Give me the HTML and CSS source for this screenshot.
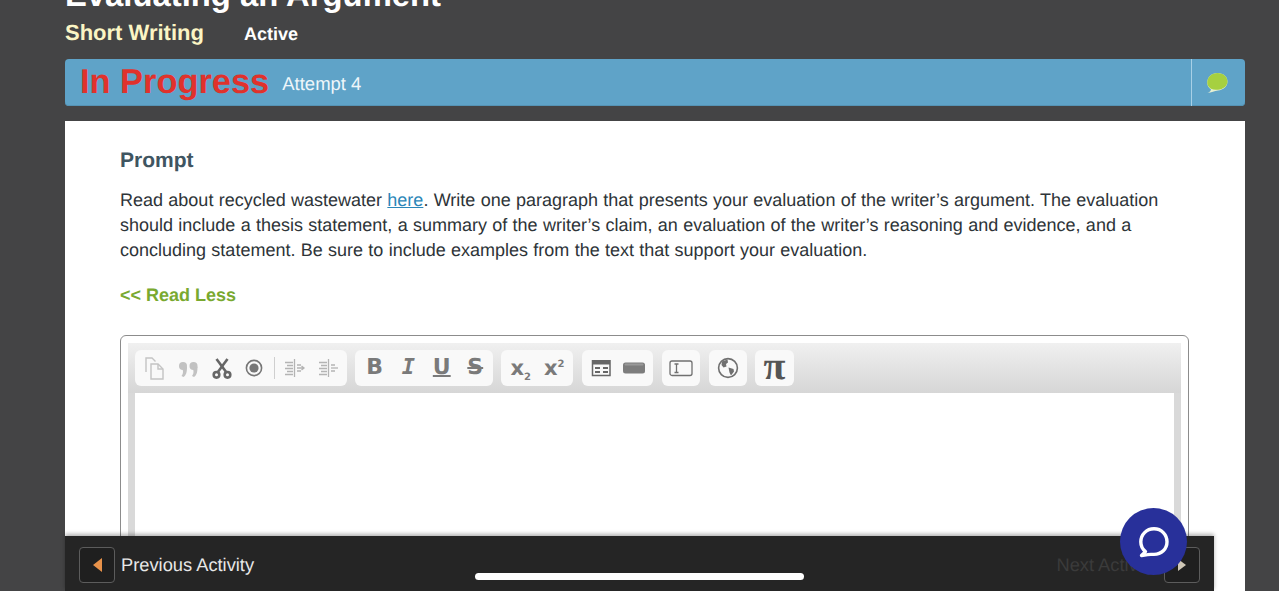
FILE: index.html
```html
<!DOCTYPE html>
<html lang="en">
<head>
<meta charset="utf-8">
<title>Evaluating an Argument</title>
<link rel="stylesheet" href="styles.css">
</head>
<body>
<div class="page">
  <h1 class="title">Evaluating an Argument</h1>
  <div class="subhead">
    <span class="kind">Short Writing</span>
    <span class="state">Active</span>
  </div>
  <div class="status">
    <div class="status-main">
      <span class="progress">In Progress</span>
      <span class="attempt">Attempt 4</span>
    </div>
    <div class="status-side">
      <svg class="bubble" width="24" height="24" viewBox="0 0 24 24">
        <path d="M2.5 23 C5 22 6 20.5 6 19.5 C3 17.5 2 14.5 2.3 11.5 C3 6.5 7 3 12.5 3 C18 3 22.5 6.5 22.5 11.5 C22.5 16.5 18 20 13 20.5 C9.5 21 6.5 22.8 2.5 23 Z" fill="#e6f0d2"/>
        <path d="M6 18.8 C3 17 2 14.5 2.3 11.5 C3 6.5 7 3 12.5 3 C18 3 22.5 6.5 22.5 11.5 C22.5 16 18.2 19.3 13 19.7 C10.5 20 8 19.8 6 18.8 Z" fill="#a6d040"/>
      </svg>
    </div>
  </div>
  <main class="panel">
    <h2 class="prompt-title">Prompt</h2>
    <p class="prompt-text">Read about recycled wastewater <a class="link" href="#">here</a>. Write one paragraph that presents your evaluation of the writer’s argument. The evaluation should include a thesis statement, a summary of the writer’s claim, an evaluation of the writer’s reasoning and evidence, and a concluding statement. Be sure to include examples from the text that support your evaluation.</p>
    <a class="read-less" href="#">&lt;&lt; Read Less</a>
    <div class="editor">
      <div class="editor-inner">
        <div class="toolbar">
          <div class="group g1">
            <svg class="ic" width="24" height="24" viewBox="0 0 24 24" fill="none" stroke="#c4c4c4" stroke-width="1.4"><path d="M4 16 V2 H10 L13.5 5.5"/><path d="M9 8 H16 L21 13 V23 H9 Z"/><path d="M16 8 V13 H21"/></svg>
            <svg class="ic" width="24" height="24" viewBox="0 0 24 24" fill="#c2c2c2"><circle cx="7" cy="10" r="4"/><path d="M7.5 21 C10.5 19 11 15.5 11 10.5 L6.5 13 C7.5 16 7 18 5.5 20 Z"/><circle cx="17.5" cy="10" r="4"/><path d="M18 21 C21 19 21.5 15.5 21.5 10.5 L17 13 C18 16 17.5 18 16 20 Z"/></svg>
            <svg class="ic" width="24" height="24" viewBox="0 0 24 24" fill="none" stroke="#666" stroke-width="2.6"><path d="M6.5 3 L16.5 16.5"/><path d="M17.5 3 L7.5 16.5"/><circle cx="6.5" cy="18.8" r="2.8"/><circle cx="17.5" cy="18.8" r="2.8"/></svg>
            <svg class="ic radio" width="24" height="24" viewBox="0 0 24 24"><circle cx="12" cy="12" r="7.6" fill="none" stroke="#777" stroke-width="1.6"/><circle cx="12" cy="12" r="4.6" fill="#777"/></svg>
            <span class="divider"></span>
            <svg class="ic indent" width="24" height="24" viewBox="0 0 24 24" fill="none" stroke="#b4b4b4" stroke-width="1.3"><path d="M12.5 3 V21"/><path d="M3 6.5 H11 M5 9.5 H11 M3 12.5 H11 M5 15.5 H11 M3 18.5 H11 M15 9 H19 M15 15 H19"/><path d="M15 12 H22 M19.5 10 L22 12 L19.5 14"/></svg>
            <svg class="ic outdent" width="24" height="24" viewBox="0 0 24 24" fill="none" stroke="#b4b4b4" stroke-width="1.3"><path d="M12.5 3 V21"/><path d="M3 6.5 H11 M5 9.5 H11 M3 12.5 H11 M5 15.5 H11 M3 18.5 H11 M15 9 H19 M15 15 H19"/><path d="M15 12 H22"/></svg>
          </div>
          <div class="group g2">
            <span class="fmt bold">B</span>
            <span class="fmt italic">I</span>
            <span class="fmt underline">U</span>
            <span class="fmt strike">S</span>
          </div>
          <div class="group g3">
            <span class="fmt script">x<sub>2</sub></span>
            <span class="fmt script">x<sup>2</sup></span>
          </div>
          <div class="group g4">
            <svg class="ic" width="24" height="24" viewBox="0 0 24 24"><path d="M3.5 4.8 H21 V19.5 H3.5 Z" fill="none" stroke="#666" stroke-width="1.5"/><path d="M3.5 5 H21 V8.5 H3.5 Z" fill="#666"/><path d="M6 11 H11 V13 H6 Z M6 15 H11 V17 H6 Z M14 11 H19 V13 H14 Z M14 15 H19 V17 H14 Z" fill="#666"/></svg>
            <svg class="ic" width="24" height="24" viewBox="0 0 24 24"><rect x="1" y="6.5" width="22" height="11" rx="2.5" fill="#7d7d7d"/><rect x="2.5" y="7.5" width="19" height="2" rx="1" fill="#999"/></svg>
          </div>
          <div class="group g5">
            <svg class="ic" width="24" height="24" viewBox="0 0 24 24" fill="none" stroke="#707070" stroke-width="1.3"><rect x="1" y="5" width="22" height="14.5" rx="2"/><path d="M5.5 8 H9.5 M5.5 16.5 H9.5 M7.5 8 V16.5"/></svg>
          </div>
          <div class="group g6">
            <svg class="ic" width="24" height="24" viewBox="0 0 24 24"><circle cx="12" cy="12" r="9.4" fill="none" stroke="#707070" stroke-width="1.6"/><path d="M6 5.5 L11.5 3.5 L12 6.5 L10 8 L10.5 10.5 L7.5 11.5 L5.5 9 Z M12.5 11.5 L17.5 13 L18 15.5 L15 19.5 L13.5 16.5 Z" fill="#707070"/></svg>
          </div>
          <div class="group g7">
            <span class="pi">π</span>
          </div>
        </div>
        <div class="editor-area"></div>
      </div>
    </div>
  </main>
</div>

<footer class="bottom-bar">
  <div class="nav-prev">
    <span class="nav-btn"><span class="arrow-left"></span></span>
    <span class="nav-label">Previous Activity</span>
  </div>
  <div class="nav-next">
    <span class="nav-label dim">Next Activity</span>
    <span class="nav-btn"><span class="arrow-right"></span></span>
  </div>
</footer>
<div class="home-indicator"></div>
<div class="chat">
  <svg width="34" height="34" viewBox="0 0 34 34" fill="none"><path d="M4.5 30.5 L8.5 26.6 C5.2 24 3.8 20.5 3.8 16.8 C3.8 9.6 9.5 3.8 17 3.8 C24.5 3.8 30 9.6 30 16.8 C30 24 24.5 29.4 17 29.4 C14.5 29.4 12.5 29.2 10.5 29.6 Z" stroke="#fff" stroke-width="3.4" stroke-linejoin="round"/></svg>
</div>
</body>
</html>
```

FILE: styles.css
```css
* { box-sizing: border-box; }
html, body { margin: 0; height: 100%; overflow: hidden; }
body {
  background: #444445;
  font-family: "Liberation Sans", Arial, sans-serif;
  text-rendering: geometricPrecision;
  position: relative;
}
.page {
  padding: 0 34px 0 65px;
  height: 591px;
  display: flex;
  flex-direction: column;
}
.title {
  margin: -23px 0 0;
  font-size: 32.8px;
  line-height: 36px;
  height: 36px;
  font-weight: 700;
  color: #fff;
  white-space: nowrap;
}
.subhead {
  display: flex;
  align-items: baseline;
  gap: 40px;
  height: 42px;
  margin-top: 3px;
}
.kind { font-size: 22px; line-height: 34px; font-weight: 700; color: #fbf5c4; }
.state { font-size: 18px; line-height: 36px; font-weight: 700; color: #fff; }
.status {
  display: flex;
  height: 47px;
  margin-top: 1px;
  background: #5fa3c8;
  border-radius: 4px;
  box-shadow: inset 0 -1px 0 #5593b5;
}
.status-main {
  flex: 1;
  display: flex;
  align-items: center;
  gap: 13px;
  padding-left: 15px;
  border-right: 1px solid #a8d0e6;
}
.progress { font-size: 34.4px; line-height: 42px; padding-bottom: 2px; font-weight: 700; color: #e0322c; }
.attempt { font-size: 18.5px; color: #eef6fa; padding-top: 2px; }
.status-side {
  width: 53px;
  display: flex;
  align-items: center;
  justify-content: center;
  padding-bottom: 2px;
}
.bubble { margin-right: 3px; }
.panel {
  margin-top: 15px;
  flex: 1;
  min-height: 0;
  overflow: hidden;
  background: #fff;
  padding: 26px 56px 0 55px;
}
.prompt-title {
  margin: 0;
  font-size: 21px;
  line-height: 28px;
  font-weight: 700;
  color: #3f5561;
}
.prompt-text {
  margin: 13px 0 0;
  font-size: 18px;
  line-height: 25px;
  word-spacing: .3px;
  color: #2e3438;
}
.link { color: #2b86b8; text-decoration: underline; }
.read-less {
  display: block;
  margin-top: 19px;
  font-size: 18px;
  line-height: 26px;
  font-weight: 700;
  color: #79a92f;
  text-decoration: none;
}
.editor {
  margin-top: 27px;
  height: 300px;
  border: 1px solid #8c8c8c;
  border-radius: 6px;
  padding: 7px 7px 0;
  background: #fff;
}
.editor-inner {
  height: 100%;
  display: flex;
  flex-direction: column;
  padding: 0 7px;
  background: #d9d9d9;
}
.toolbar {
  display: flex;
  gap: 8px;
  height: 50px;
  margin: 0 -7px;
  padding: 7px 7px 6px;
  background: linear-gradient(#f0f0f0, #d6d6d6);
}
.editor-area { flex: 1; background: #fff; }
.group {
  height: 36px;
  display: flex;
  align-items: center;
  background: #f9f9f9;
  border-radius: 6px;
}
.ic { flex: none; }
.g1 { width: 212px; padding-left: 7px; gap: 10px; }
.radio { margin-left: -2px; }
.divider { width: 1px; height: 22px; background: #cfcfcf; margin-left: -2px; }
.indent { margin-left: -3px; }
.outdent { margin-left: -0.5px; }
.g2 { width: 138px; padding-left: 3px; }
.g3 { width: 72px; padding-left: 3px; }
.g4 { width: 71px; padding-left: 7px; gap: 9px; margin-left: 1px; }
.g5, .g6, .g7 { width: 38px; justify-content: center; }
.g5 { margin-left: 1px; }
.g6 { margin-left: 1px; }
.g7 { width: 39px; }
.fmt {
  width: 33.5px;
  text-align: center;
  font-size: 22px;
  line-height: 24px;
  font-weight: 700;
  color: #7a7a7a;
  font-family: "DejaVu Sans", sans-serif;
}
.italic { font-family: "DejaVu Sans Mono", monospace; font-style: italic; }
.underline { text-decoration: underline; text-decoration-thickness: 2px; text-underline-offset: 1px; }
.strike { text-decoration: line-through; }
.script { font-size: 21px; }
.script sub, .script sup { font-size: 10px; line-height: 0; }
.pi {
  font-family: "Liberation Serif", serif;
  font-size: 40px;
  line-height: 30px;
  padding-bottom: 5px;
  font-weight: 700;
  color: #555;
}
.bottom-bar {
  position: absolute;
  left: 65px;
  top: 536px;
  width: 1149px;
  height: 55px;
  background: #252525;
  box-shadow: 0 -2px 4px rgba(0, 0, 0, .3);
  display: flex;
  justify-content: space-between;
  padding: 11px 14px 0;
}
.nav-prev, .nav-next { display: flex; align-items: flex-start; gap: 6px; }
.nav-btn {
  width: 36px;
  height: 36px;
  border: 1px solid #5c5c5c;
  border-radius: 4px;
  background: #1f1f1f;
  display: flex;
  align-items: center;
  justify-content: center;
}
.nav-label { font-size: 18.3px; line-height: 36px; color: #e8e8e8; }
.nav-label.dim { color: #3b3b3b; }
.nav-next { gap: 0; }
.nav-next .nav-label { margin-right: 8px; }
.arrow-left {
  width: 0; height: 0;
  border-top: 7px solid transparent;
  border-bottom: 7px solid transparent;
  border-right: 9px solid #e8924a;
}
.arrow-right {
  width: 0; height: 0;
  border-top: 6px solid transparent;
  border-bottom: 6px solid transparent;
  border-left: 8px solid #cfc7b6;
}
.home-indicator {
  position: absolute;
  left: 475px;
  top: 573px;
  width: 329px;
  height: 7px;
  background: #fff;
  border-radius: 4px;
}
.chat {
  position: absolute;
  left: 1120px;
  top: 508px;
  width: 67px;
  height: 67px;
  border-radius: 50%;
  background: #28309a;
  display: flex;
  align-items: center;
  justify-content: center;
}
```
